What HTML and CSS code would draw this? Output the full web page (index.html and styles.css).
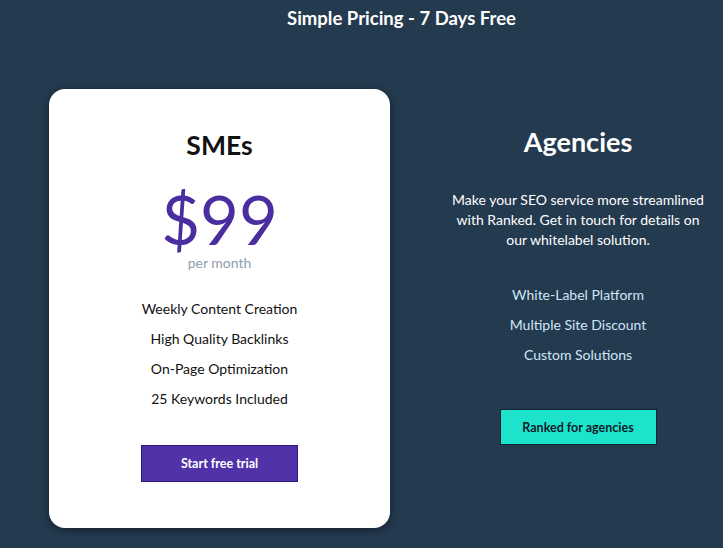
FILE: index.html
```html
<html lang="en">
<head>
    <meta charset="UTF-8">
    <meta name="viewport" content="width=device-width, initial-scale=1.0">
    <title>Simple Pricing</title>
    <link rel="stylesheet" href="styles.css">
</head>
<body>
    <h1 class="page-title">Simple Pricing - 7 Days Free</h1>

    <div class="plans">
        <!-- SME plan card -->
        <div class="plan-card">
            <h2 class="plan-name">SMEs</h2>
            <div class="price">$99</div>
            <div class="per-month">per month</div>
            <ul class="features">
                <li>Weekly Content Creation</li>
                <li>High Quality Backlinks</li>
                <li>On-Page Optimization</li>
                <li>25 Keywords Included</li>
            </ul>
            <button class="btn-trial">Start free trial</button>
        </div>

        <!-- Agencies -->
        <div class="agencies">
            <h2 class="agencies-name">Agencies</h2>
            <p class="agencies-text">Make your SEO service more streamlined with Ranked. Get in touch for details on our whitelabel solution.</p>
            <ul class="agency-features">
                <li>White-Label Platform</li>
                <li>Multiple Site Discount</li>
                <li>Custom Solutions</li>
            </ul>
            <button class="btn-agencies">Ranked for agencies</button>
        </div>
    </div>
</body>
</html>
```

FILE: styles.css
```css
/* General Styling */
body {
    font-family: 'Lato', 'Liberation Sans', sans-serif;
    background-color: #243a4f;
    color: #fff;
    margin: 0;
}

.page-title {
    margin: 0;
    padding: 7px 0 0 80px;
    font-size: 18.5px;
    line-height: 22px;
    font-weight: 700;
    text-align: center;
}

.plans {
    display: flex;
    align-items: flex-start;
    padding: 60px 0 0 49px;
    gap: 43px;
}

/* Card */
.plan-card {
    width: 341px;
    background: #fff;
    color: #111;
    border-radius: 16px;
    box-shadow: 0 2px 8px rgba(0, 0, 0, 0.45);
    display: flex;
    flex-direction: column;
    align-items: center;
    padding: 41px 0 46px;
    box-sizing: border-box;
}

.plan-name {
    margin: 0;
    font-size: 26.5px;
    line-height: 30px;
    font-weight: 700;
}

.price {
    margin-top: 31px;
    font-size: 67px;
    line-height: 56px;
    color: #4a2d9f;
}

.per-month {
    margin-top: 8px;
    font-size: 14px;
    line-height: 16px;
    color: #8d9eae;
}

.features {
    list-style: none;
    margin: 23px 0 0;
    padding: 0;
    text-align: center;
    font-size: 14px;
    line-height: 30px;
}

.btn-trial {
    margin-top: 31px;
    width: 157px;
    height: 37px;
    border: 1px solid #2c1a78;
    background: #5232a8;
    color: #fff;
    font-family: inherit;
    font-size: 12.5px;
    font-weight: 700;
    cursor: pointer;
}

/* Agencies */
.agencies {
    width: 290px;
    display: flex;
    flex-direction: column;
    align-items: center;
    text-align: center;
}

.agencies-name {
    margin: 38px 0 0;
    font-size: 27px;
    line-height: 30px;
    font-weight: 700;
}

.agencies-text {
    margin: 33px 0 0;
    width: 262px;
    font-size: 14px;
    line-height: 20px;
}

.agency-features {
    list-style: none;
    margin: 30px 0 0;
    padding: 0;
    font-size: 14px;
    line-height: 30px;
    color: #cfe6f8;
}

.btn-agencies {
    margin-top: 39px;
    width: 157px;
    height: 36px;
    border: 1px solid #0f2236;
    background: #1ee3cc;
    color: #0d1b2a;
    font-family: inherit;
    font-size: 12.5px;
    font-weight: 700;
    cursor: pointer;
}
```
